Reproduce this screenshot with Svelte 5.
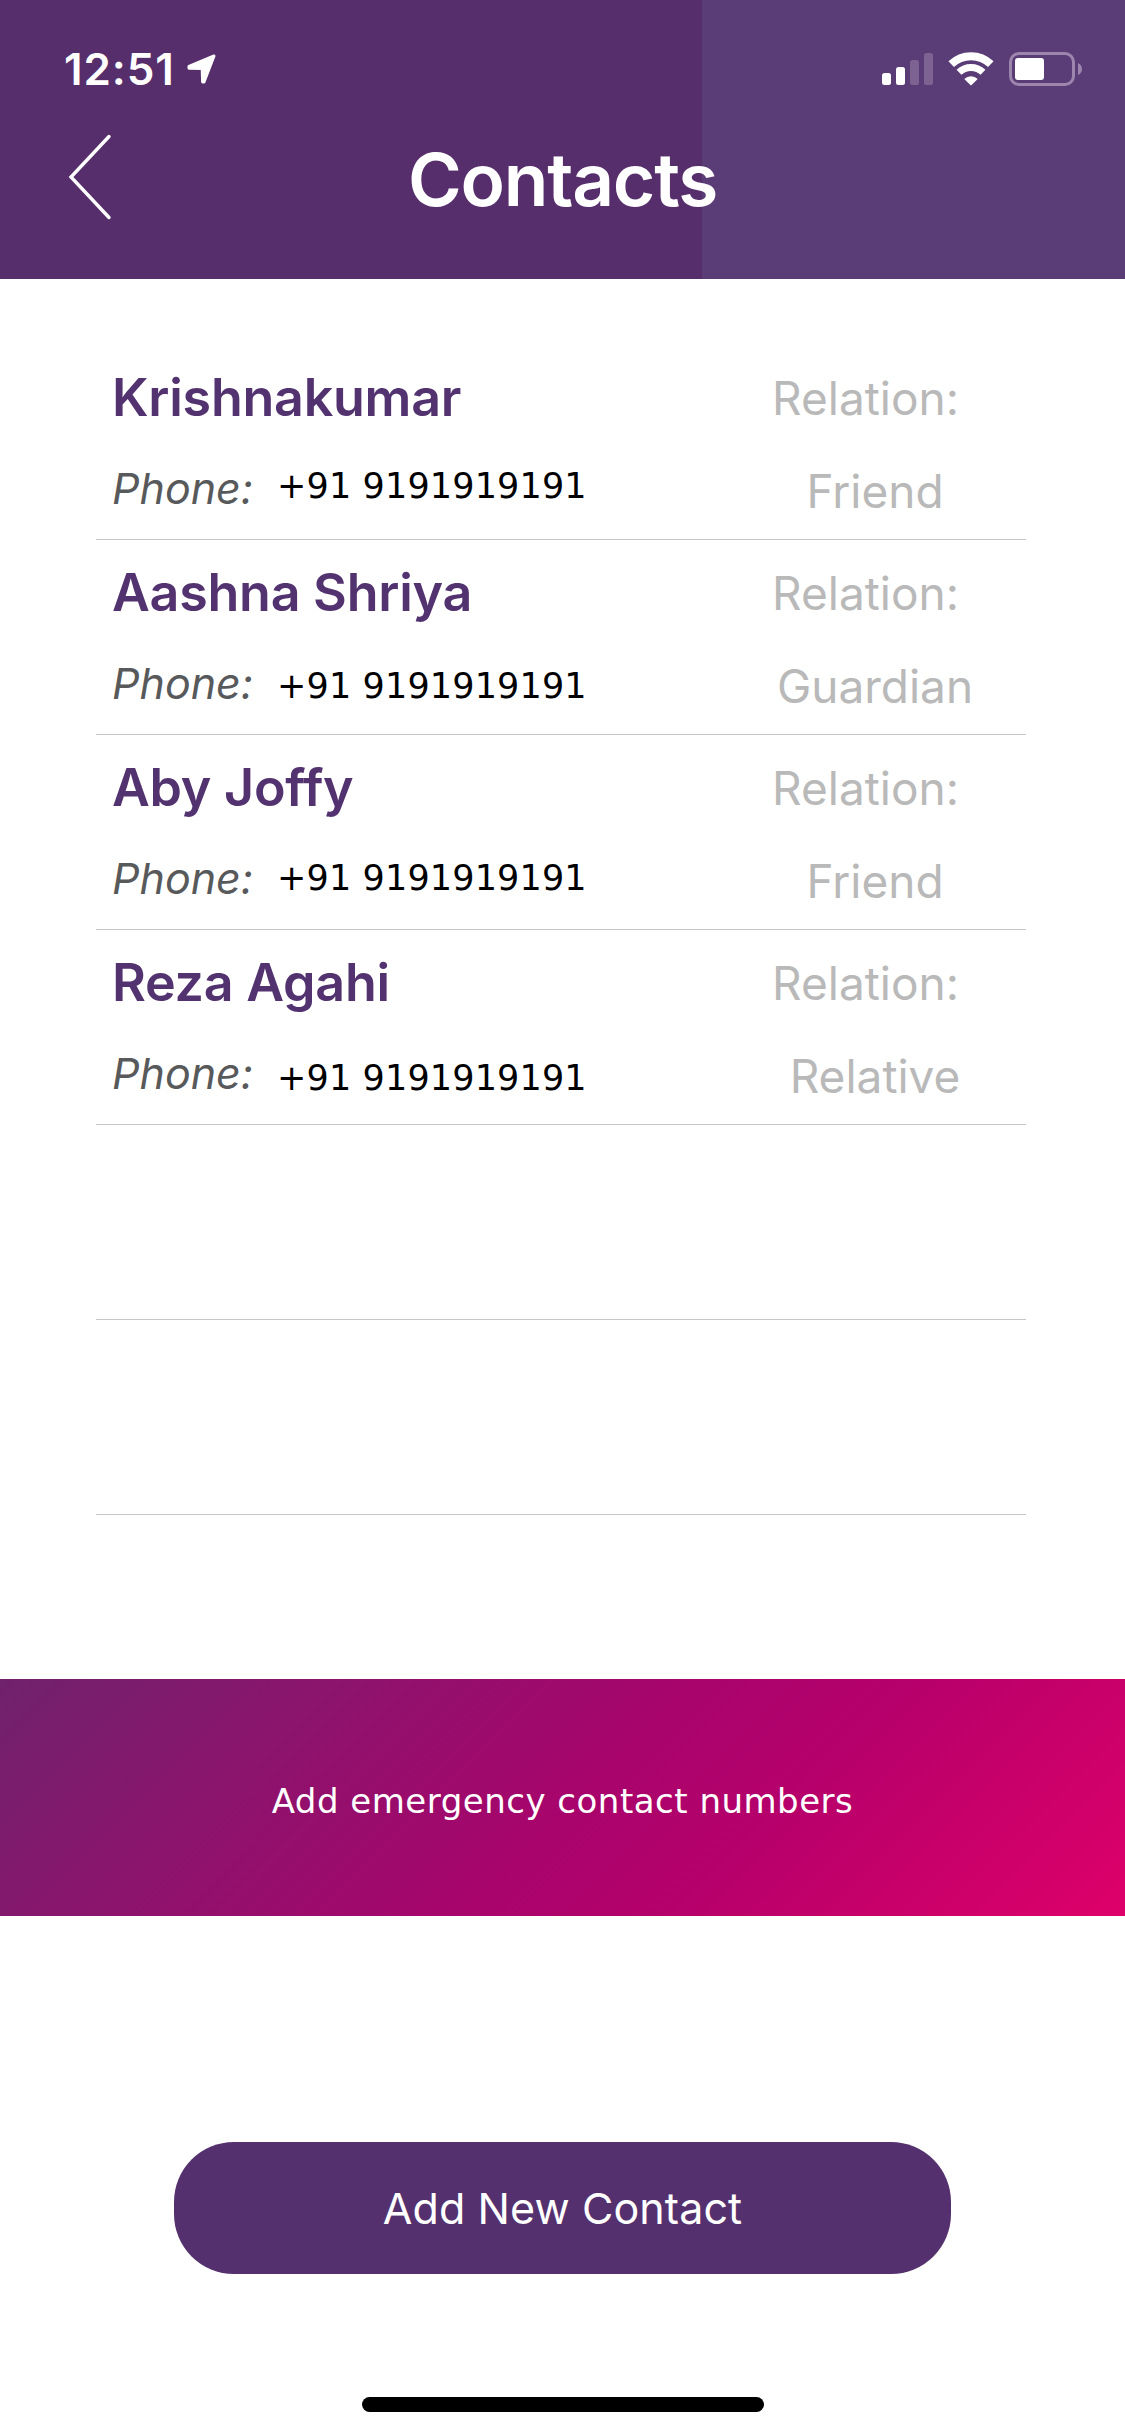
<script>
	let contacts = [
		{ name: 'Krishnakumar', phone: '+91 9191919191', relation: 'Friend', phoneTop: 0 },
		{ name: 'Aashna Shriya', phone: '+91 9191919191', relation: 'Guardian', phoneTop: 5 },
		{ name: 'Aby Joffy', phone: '+91 9191919191', relation: 'Friend', phoneTop: 2 },
		{ name: 'Reza Agahi', phone: '+91 9191919191', relation: 'Relative', phoneTop: 7 }
	];
	const emptyRows = [1, 2];
</script>

<main>
	<header>
		<div class="status">
			<span class="time">12:51</span>
			<svg class="location" width="30" height="30" viewBox="0 0 30 30">
				<path d="M2 12.3 L27 2 L17 28 L15.6 28 L15.2 14.6 L2 14.2 Z" fill="#fff" stroke="#fff" stroke-width="3" stroke-linejoin="round" />
			</svg>
			<svg class="signal" width="51" height="32" viewBox="0 0 51 32" fill="#fff">
				<rect x="0" y="20" width="9" height="12" rx="2.5" />
				<rect x="14" y="14" width="9" height="18" rx="2.5" />
				<rect x="28" y="7" width="9" height="25" rx="2.5" fill="#7d6391" />
				<rect x="42" y="0" width="9" height="32" rx="2.5" fill="#7d6391" />
			</svg>
			<svg class="wifi" width="46" height="34" viewBox="0 0 46 34">
				<path d="M3.2 12.2 A28.5 28.5 0 0 1 42.8 12.2" fill="none" stroke="#fff" stroke-width="8" />
				<path d="M11 20.3 A17.4 17.4 0 0 1 35 20.3" fill="none" stroke="#fff" stroke-width="7" />
				<path d="M16.3 27 A9.6 9.6 0 0 1 29.7 27 L23.6 33 Q23 33.5 22.4 33 Z" fill="#fff" />
			</svg>
			<svg class="battery" width="74" height="34" viewBox="0 0 74 34">
				<rect x="1.5" y="1.5" width="63" height="31" rx="8.5" fill="none" stroke="#9c86ae" stroke-width="3" />
				<rect x="6" y="6" width="29" height="22" rx="3" fill="#fff" />
				<path d="M69 11 Q73 13 73 17 Q73 21 69 23 Z" fill="#9c86ae" />
			</svg>
		</div>
		<div class="titlebar">
			<button class="back" aria-label="Back">
				<svg width="44" height="86" viewBox="0 0 44 86">
					<path d="M41 2.5 L3 43 L41 83.5" fill="none" stroke="#fff" stroke-width="3.4" stroke-linecap="round" />
				</svg>
			</button>
			<h1>Contacts</h1>
		</div>
	</header>

	<ul>
		{#each contacts as contact}
			<li>
				<div class="details">
					<h2>{contact.name}</h2>
					<div class="line">
						<em>Phone:</em>
						<span class="number" style="padding-top: {contact.phoneTop}px">{contact.phone}</span>
					</div>
				</div>
				<div class="relation">
					<span class="label">Relation:</span>
					<span class="value">{contact.relation}</span>
				</div>
			</li>
		{/each}
		{#each emptyRows as row}
			<li></li>
		{/each}
	</ul>

	<p class="banner">Add emergency contact numbers</p>

	<footer>
		<button class="add">Add New Contact</button>
		<div class="home"></div>
	</footer>
</main>

<style>
	:global(body) {
		background: #fff;
	}
	main {
		display: flex;
		flex-direction: column;
		width: 1125px;
		height: 2436px;
		background: #fff;
		font-family: Inter, 'Liberation Sans', sans-serif;
	}
	header {
		height: 279px;
		color: #fff;
		background: linear-gradient(to right, #562e6b 702px, #5a3d76 702px);
	}
	.status {
		display: flex;
		align-items: flex-start;
		height: 111px;
		padding: 0 42px 0 64px;
		box-sizing: border-box;
	}
	.time {
		width: 123px;
		font-size: 44px;
		font-weight: 600;
		line-height: 138px;
		letter-spacing: 0.9px;
	}
	.location {
		margin-top: 54px;
	}
	.signal {
		margin: 53px 15px 0 auto;
	}
	.wifi {
		margin: 51.5px 15px 0 0;
	}
	.battery {
		margin-top: 52px;
	}
	.titlebar {
		display: grid;
		grid-template-columns: 200px 725px 200px;
	}
	button {
		border: none;
		padding: 0;
		font-family: inherit;
	}
	.back {
		height: 86px;
		margin: 23px 0 0 68px;
		background: none;
		text-align: left;
	}
	h1 {
		margin: 0;
		font-size: 73px;
		font-weight: 600;
		line-height: 137px;
		letter-spacing: -1.2px;
		text-align: center;
	}
	ul {
		list-style: none;
		margin: 66px 99px 164px 96px;
		padding: 0;
	}
	li {
		display: flex;
		justify-content: space-between;
		height: 195px;
		padding: 5px 51px 0 16px;
		box-sizing: border-box;
		border-bottom: 1px solid #c6c6c8;
	}
	h2 {
		margin: 0;
		color: #533270;
		font-size: 52px;
		font-weight: 600;
		line-height: 96px;
		letter-spacing: -0.25px;
	}
	.line {
		display: flex;
		align-items: flex-start;
		margin-top: -1px;
	}
	em {
		width: 165px;
		color: #58595b;
		font-size: 43px;
		line-height: 86px;
	}
	.number {
		color: #000;
		font-family: 'DejaVu Sans', sans-serif;
		font-size: 35px;
		line-height: 82px;
		letter-spacing: 0.15px;
	}
	.relation {
		display: flex;
		flex-direction: column;
		width: 203px;
		color: #b9b9b9;
		font-size: 46px;
	}
	.label {
		line-height: 96px;
	}
	.value {
		padding-left: 3px;
		line-height: 90px;
		text-align: center;
	}
	.banner {
		height: 237px;
		margin: 0;
		color: #fff;
		background: linear-gradient(135deg, #70226c, #8f126c 28%, #a7056c 50%, #b5006b 66%, #c6006a 80%, #de006a);
		font-family: 'DejaVu Sans', sans-serif;
		font-size: 34px;
		line-height: 245px;
		letter-spacing: 0.5px;
		text-align: center;
	}
	footer {
		display: flex;
		flex-direction: column;
		align-items: center;
	}
	.add {
		width: 777px;
		height: 132px;
		margin-top: 226px;
		border-radius: 60px;
		color: #fff;
		background: #54316e;
		font-size: 43px;
		letter-spacing: 0.1px;
	}
	.home {
		width: 402px;
		height: 15px;
		margin-top: 123px;
		border-radius: 8px;
		background: #000;
	}
</style>
